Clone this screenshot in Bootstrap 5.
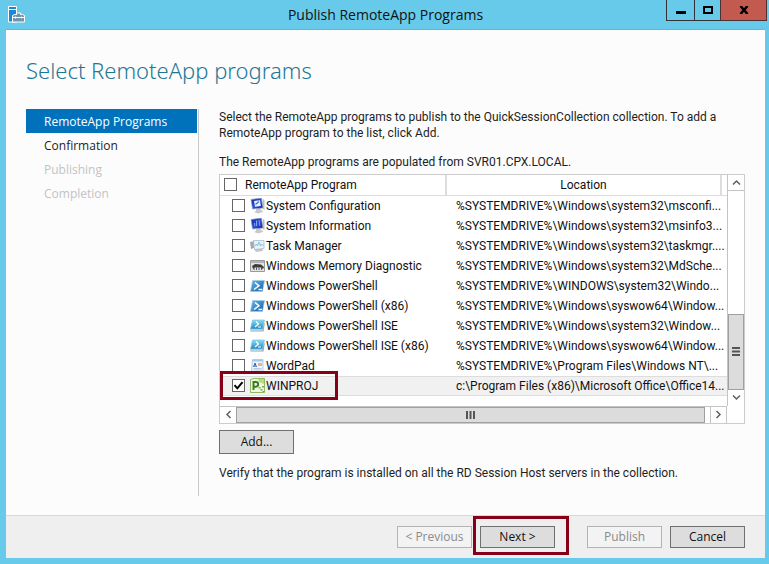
<!DOCTYPE html>
<html lang="en">
<head>
<meta charset="utf-8">
<meta name="viewport" content="width=device-width, initial-scale=1">
<title>Publish RemoteApp Programs</title>
<link href="https://cdn.jsdelivr.net/npm/bootstrap@5.3.0/dist/css/bootstrap.min.css" rel="stylesheet">
<style>
  body { font: 12px/16px "Open Sans", "Noto Sans", sans-serif; color: #1e1e1e; background: #67caea; }
  svg { display: block; flex: none; }
  .window-frame { padding: 0 4px 6px 6px; }
  .title-bar { height: 29px; color: #111; }
  .title-bar h1 { font-size: 14px; line-height: 29px; }
  .app-icon { left: 2px; top: 6px; }
  .caption-buttons { right: -2px; top: 0; }
  .caption-buttons button { width: 29px; height: 21px; padding: 0; border: 1px solid #333; border-top: 0; background: #67caea; margin-left: -1px; display: flex; align-items: center; justify-content: center; }
  .caption-buttons button:nth-child(2) { width: 27px; }
  .caption-buttons button.close-window { width: 47px; background: #c35a50; border-color: #4f3030; }
  .client { background: #fcfcfc; border-top: 1px solid #76afc3; }
  .page-title { font-family: "Noto Sans", "Open Sans", sans-serif; font-size: 22px; line-height: 32px; font-weight: 300; color: #1c7795; padding: 24px 20px 0; }
  .wizard { padding: 23px 20px 19px; }
  .steps { width: 173px; border-right: 1px solid #c8c8c8; padding-right: 1px; }
  .steps a { display: block; height: 24px; line-height: 26px; padding-left: 18px; color: #1e1e1e; text-decoration: none; }
  .steps a.active { background: #0072bc; color: #fff; }
  .steps a.disabled { color: #c3c3c3; }
  .step-body { font-family: Roboto, "Open Sans", sans-serif; padding-left: 20px; min-width: 0; }
  .intro { margin-bottom: 13px; }
  .program-list { border: 1px solid #ccc; background: #fff; }
  .program-view { min-width: 0; padding-bottom: 10px; }
  .program-view table { table-layout: fixed; width: 100%; color: #111; }
  .program-view td, .program-view th { padding: 0; height: 20px; line-height: 18px; font-weight: 400; white-space: nowrap; overflow: hidden; }
  .program-view th { border-bottom: 1px solid #ddd; border-right: 2px solid #ddd; }
  .program-view th:last-child { border-right: 0; }
  .program-view th label { padding-left: 4px; gap: 8px; height: 19px; }
  .program-view td label { padding-left: 12px; height: 20px; }
  .program-view td svg { margin: 0 1px 0 5px; }
  .program-view td + td { padding-left: 10px; }
  .program-view tr.chosen td { background: #f1f1f1; box-shadow: inset 0 1px #ddd, inset 0 -1px #ddd; }
  .col-program { width: 226px; }
  .col-rest { width: 6px; }
  .tick { appearance: none; flex: none; width: 13px; height: 13px; margin: 0; border: 1px solid #666; background: #fff; }
  .tick:checked { background: #fff url("data:image/svg+xml,%3Csvg xmlns='http://www.w3.org/2000/svg' viewBox='0 0 11 11'%3E%3Cpath d='M1.5 5.2 4.3 8.3 9.5 2.2' fill='none' stroke='%23000' stroke-width='2'/%3E%3C/svg%3E") center/11px; }
  .scroll-y { width: 17px; border-left: 1px solid #c4c4c4; }
  .scroll-x { height: 17px; border-top: 1px solid #c4c4c4; margin-right: 17px; border-right: 1px solid #c4c4c4; }
  .scroll-end { border: 0; background: #fff; padding: 0; width: 16px; height: 16px; display: flex; align-items: center; justify-content: center; }
  .scroll-y .scroll-end:first-child { border-bottom: 1px solid #c4c4c4; }
  .scroll-x .scroll-end:last-child { border-left: 1px solid #c4c4c4; margin-left: 5px; }
  .thumb { background: #dcdcdc; border: 1px solid #a0a0a0; display: flex; align-items: center; justify-content: center; }
  .scroll-y .thumb { height: 76px; margin-top: auto; }
  .dialog-btn { width: 75px; height: 22px; padding: 0; border: 1px solid #707070; background: #ddd; color: #111; line-height: 20px; text-align: center; }
  .dialog-btn.add-btn { height: 24px; line-height: 22px; margin: 6px 0 3px; font-family: "Open Sans", "Noto Sans", sans-serif; }
  .dialog-btn:disabled { border-color: #b4b4b4; background: #f3f3f3; color: #8b8b8b; }
  .button-bar { background: #efefef; border-top: 1px solid #d9d9d9; padding: 10px 20px; gap: 8px; }
  .publish-btn { margin-left: 24px; }
  .callout-box { border: 3px solid #860018; pointer-events: none; }
  .callout-row { left: 0; bottom: 6px; width: 118px; height: 29px; }
  .callout-next { inset: -10px -14px -7px -7px; }
</style>
<script src="https://cdn.jsdelivr.net/npm/bootstrap@5.3.0/dist/js/bootstrap.bundle.min.js"></script>
</head>
<body>
<svg class="position-absolute" width="0" height="0" aria-hidden="true">
  <defs>
    <linearGradient id="screenBlue" x2="1" y2="1"><stop stop-color="#1526a4"/><stop offset=".55" stop-color="#2c50d8"/><stop offset="1" stop-color="#0f1b86"/></linearGradient>
    <linearGradient id="shellBlue" x2="1" y2="1"><stop stop-color="#6eb8e6"/><stop offset="1" stop-color="#0b5ca8"/></linearGradient>
    <linearGradient id="iseBlue" x2="0" y2="1"><stop stop-color="#8fdcf3"/><stop offset="1" stop-color="#1787c5"/></linearGradient>
  </defs>
  <symbol id="i-config" viewBox="0 0 15 16">
    <path d="M6 11l4-1 1 2 2 1v1l-5 1.500-4-1.500 2-1z" fill="#c9c9cd"/>
    <path d="M1 1.500 11.500 0l1.500 10-10.500 1z" fill="url(#screenBlue)" stroke="#9aa3bd" stroke-width=".7"/>
    <path d="M4 3l6-.8.800 5.800-5.800.7z" fill="#e8f1ff"/><path d="M5.500 6.500 9 3.500" fill="none" stroke="#3470d2" stroke-width="1.200"/>
    <path d="M13 1l1.500 1v10l-1.500-1z" fill="#bbbcc6"/>
  </symbol>
  <symbol id="i-info" viewBox="0 0 15 16">
    <path d="M6 11l4-1 1 2 2 1v1l-5 1.500-4-1.500 2-1z" fill="#c9c9cd"/>
    <path d="M1 1.500 11.500 0l1.500 10-10.500 1z" fill="url(#screenBlue)" stroke="#9aa3bd" stroke-width=".7"/>
    <path d="M6.500 2.500v5.500M4.500 5l.3 3M9 2l.8 6" stroke="#7ea6f5" stroke-width="1"/>
    <path d="M13 1l1.500 1v10l-1.500-1z" fill="#bbbcc6"/>
  </symbol>
  <symbol id="i-task" viewBox="0 0 15 16">
    <path d="M0 4l4-1v7l-3 1z" fill="#a5a9ad"/><path d="M4 11l8-1 1 3-7 1z" fill="#c3c7cb"/>
    <path d="M3.500 2.500h10.500v8l-9.500 1z" fill="#e7f4fb" stroke="#a9bac6" stroke-width=".8"/>
    <path d="M5 8l1.500-2 1 2 1.500-4 1.500 4 1-2 2 2" fill="none" stroke="#6cb9de" stroke-width=".8"/>
  </symbol>
  <symbol id="i-memory" viewBox="0 0 15 16">
    <path d="M.5 2.500h14v11H.5z" fill="#e3e3e3" stroke="#999"/><path d="M1 3h13v2H1z" fill="#aeb4ba"/>
    <path d="M2 8l3-2 6 .5 3 2.500-1 2-2-1.500H5L3 11z" fill="#3c3c3c"/><path d="M4 10v2M6.500 9.500V12M9 9.500V12M11.500 10v2" stroke="#555"/>
  </symbol>
  <symbol id="i-shell" viewBox="0 0 15 16">
    <path d="M2.500 2.500h12l-2 11H.500z" fill="url(#shellBlue)" stroke="#9ccbe8" stroke-width=".7"/>
    <path d="M5 4.500l4 3.300-5 3.700M8.500 11.500H12" fill="none" stroke="#fff" stroke-width="1.500"/>
  </symbol>
  <symbol id="i-ise" viewBox="0 0 15 16">
    <path d="M2.500 2h12l-2 9H.500z" fill="url(#iseBlue)" stroke="#7fc0dc" stroke-width=".7"/>
    <path d="M.500 11h12l1.500-6 .8.500-1.300 8H.500z" fill="#8fa9ba"/><path d="M1 11.500h11.500v1H1z" fill="#e4eef3"/>
    <path d="M6 3.500l2.500 2.500L5 9M8 9h3" fill="none" stroke="#fff" stroke-width="1.200"/>
  </symbol>
  <symbol id="i-wordpad" viewBox="0 0 15 16">
    <path d="M2.500 1.500h10.500v12H1.500z" fill="#eef5fc" stroke="#b4cbe2"/><path d="M2 2h11v1.500H2z" fill="#a3c6ea"/>
    <path d="M3.500 9L5 5l1.500 4M4 8h2" fill="none" stroke="#2c64b5"/><path d="M8 5h4v3H8z" fill="#e6b48a"/><path d="M3.500 10.500h8M3.500 12h8" stroke="#a9bfd4" stroke-width=".8"/>
  </symbol>
  <symbol id="i-project" viewBox="0 0 15 16">
    <path d="M.5 1.500 4 .5h10.500v14H.5z" fill="#edf6e0" stroke="#8fba62"/><path d="M8 1h6v5L9 4z" fill="#b7d98a"/>
    <path d="M3.500 12V4h2.300a2.300 2.300 0 0 1 0 4.700H3.500" fill="none" stroke="#3c7a1d" stroke-width="1.900"/>
    <path d="M8.500 9h2v1.500h-2zM10.500 11h2v1.500h-2zM12 8h2v1.500h-2zM12.500 13h2v1h-2z" fill="#77b03b"/>
  </symbol>
</svg>

<div class="window-frame min-vh-100 d-flex flex-column">
  <header class="title-bar position-relative text-center">
    <svg class="app-icon position-absolute" width="17" height="17" viewBox="0 0 17 17" aria-hidden="true">
      <path d="M.5.500h8v15.500h-8z" fill="#1f86d2" stroke="#fff"/><path d="M1 3.500h7" stroke="#fff"/>
      <path d="M4.500 9.500 6.500 8.500h2v-1.500h4v1.500h2l2 1V16h-12z" fill="#7393a7" stroke="#fff"/><path d="M4.500 11.500h12M7.500 10.500v2M13.500 10.500v2" stroke="#fff" fill="none"/>
    </svg>
    <h1 class="m-0 fw-normal">Publish RemoteApp Programs</h1>
    <div class="caption-buttons position-absolute d-flex">
      <button type="button" aria-label="Minimize"><svg width="10" height="10"><path d="M0 6h10v3H0z"/></svg></button>
      <button type="button" aria-label="Maximize"><svg width="10" height="8"><path d="M1 1h8v6H1z" fill="none" stroke="#000" stroke-width="2"/></svg></button>
      <button type="button" class="close-window" aria-label="Close"><svg width="10" height="8"><path d="M1.500 0l7 8M8.500 0l-7 8" stroke="#000" stroke-width="2.500"/></svg></button>
    </div>
  </header>

  <main class="client flex-grow-1 d-flex flex-column">
    <h2 class="page-title m-0">Select RemoteApp programs</h2>
    <div class="wizard flex-grow-1 d-flex">
      <nav class="steps flex-shrink-0" aria-label="Wizard steps">
        <a href="#programs" class="active" aria-current="step">RemoteApp Programs</a>
        <a href="#confirmation">Confirmation</a>
        <a href="#publishing" class="disabled" aria-disabled="true">Publishing</a>
        <a href="#completion" class="disabled" aria-disabled="true">Completion</a>
      </nav>
      <section class="step-body flex-grow-1" id="programs">
        <p class="intro">Select the RemoteApp programs to publish to the QuickSessionCollection collection. To add a RemoteApp program to the list, click Add.</p>
        <p class="mb-1">The RemoteApp programs are populated from SVR01.CPX.LOCAL.</p>
        <div class="program-list">
          <div class="d-flex position-relative">
            <div class="program-view flex-grow-1">
              <table>
                <colgroup><col class="col-program"><col><col class="col-rest"></colgroup>
                <thead>
                  <tr><th scope="col"><label class="d-flex align-items-center"><input type="checkbox" class="tick">RemoteApp Program</label></th><th scope="col" class="text-center">Location</th><th></th></tr>
                </thead>
                <tbody>
                  <tr><td><label class="d-flex align-items-center"><input type="checkbox" class="tick"><svg width="15" height="16"><use href="#i-config"/></svg>System Configuration</label></td><td colspan="2">%SYSTEMDRIVE%\Windows\system32\msconfi...</td></tr>
                  <tr><td><label class="d-flex align-items-center"><input type="checkbox" class="tick"><svg width="15" height="16"><use href="#i-info"/></svg>System Information</label></td><td colspan="2">%SYSTEMDRIVE%\Windows\system32\msinfo3...</td></tr>
                  <tr><td><label class="d-flex align-items-center"><input type="checkbox" class="tick"><svg width="15" height="16"><use href="#i-task"/></svg>Task Manager</label></td><td colspan="2">%SYSTEMDRIVE%\Windows\system32\taskmgr....</td></tr>
                  <tr><td><label class="d-flex align-items-center"><input type="checkbox" class="tick"><svg width="15" height="16"><use href="#i-memory"/></svg>Windows Memory Diagnostic</label></td><td colspan="2">%SYSTEMDRIVE%\Windows\system32\MdSche...</td></tr>
                  <tr><td><label class="d-flex align-items-center"><input type="checkbox" class="tick"><svg width="15" height="16"><use href="#i-shell"/></svg>Windows PowerShell</label></td><td colspan="2">%SYSTEMDRIVE%\WINDOWS\system32\Windo...</td></tr>
                  <tr><td><label class="d-flex align-items-center"><input type="checkbox" class="tick"><svg width="15" height="16"><use href="#i-shell"/></svg>Windows PowerShell (x86)</label></td><td colspan="2">%SYSTEMDRIVE%\Windows\syswow64\Window...</td></tr>
                  <tr><td><label class="d-flex align-items-center"><input type="checkbox" class="tick"><svg width="15" height="16"><use href="#i-ise"/></svg>Windows PowerShell ISE</label></td><td colspan="2">%SYSTEMDRIVE%\Windows\system32\Window...</td></tr>
                  <tr><td><label class="d-flex align-items-center"><input type="checkbox" class="tick"><svg width="15" height="16"><use href="#i-ise"/></svg>Windows PowerShell ISE (x86)</label></td><td colspan="2">%SYSTEMDRIVE%\Windows\syswow64\Window...</td></tr>
                  <tr><td><label class="d-flex align-items-center"><input type="checkbox" class="tick"><svg width="15" height="16"><use href="#i-wordpad"/></svg>WordPad</label></td><td colspan="2">%SYSTEMDRIVE%\Program Files\Windows NT\...</td></tr>
                  <tr class="chosen"><td><label class="d-flex align-items-center"><input type="checkbox" class="tick" checked><svg width="15" height="16"><use href="#i-project"/></svg>WINPROJ</label></td><td colspan="2">c:\Program Files (x86)\Microsoft Office\Office14...</td></tr>
                </tbody>
              </table>
            </div>
            <div class="scroll-y flex-shrink-0 d-flex flex-column">
              <button type="button" class="scroll-end" aria-label="Scroll up"><svg width="9" height="7"><path d="M1 5.500 4.500 2 8 5.500" fill="none" stroke="#606060" stroke-width="1.500"/></svg></button>
              <div class="thumb"><svg width="8" height="9"><path d="M0 1h8M0 4.500h8M0 8h8" stroke="#555" stroke-width="2"/></svg></div>
              <button type="button" class="scroll-end" aria-label="Scroll down"><svg width="9" height="7"><path d="M1 1.500 4.500 5 8 1.500" fill="none" stroke="#606060" stroke-width="1.500"/></svg></button>
            </div>
            <div class="callout-box callout-row position-absolute"></div>
          </div>
          <div class="scroll-x d-flex">
            <button type="button" class="scroll-end" aria-label="Scroll left"><svg width="7" height="9"><path d="M5.500 1 2 4.500 5.500 8" fill="none" stroke="#606060" stroke-width="1.500"/></svg></button>
            <div class="thumb flex-grow-1"><svg width="9" height="8"><path d="M1 0v8M4.500 0v8M8 0v8" stroke="#555" stroke-width="2"/></svg></div>
            <button type="button" class="scroll-end" aria-label="Scroll right"><svg width="7" height="9"><path d="M1.500 1 5 4.500 1.500 8" fill="none" stroke="#606060" stroke-width="1.500"/></svg></button>
          </div>
        </div>
        <button type="button" class="dialog-btn add-btn d-block">Add...</button>
        <p class="mb-0 pt-2">Verify that the program is installed on all the RD Session Host servers in the collection.</p>
      </section>
    </div>
    <footer class="button-bar d-flex justify-content-end">
      <button type="button" class="dialog-btn" disabled>&lt; Previous</button>
      <div class="position-relative">
        <button type="button" class="dialog-btn d-block">Next &gt;</button>
        <div class="callout-box callout-next position-absolute"></div>
      </div>
      <button type="button" class="dialog-btn publish-btn" disabled>Publish</button>
      <button type="button" class="dialog-btn">Cancel</button>
    </footer>
  </main>
</div>
</body>
</html>
